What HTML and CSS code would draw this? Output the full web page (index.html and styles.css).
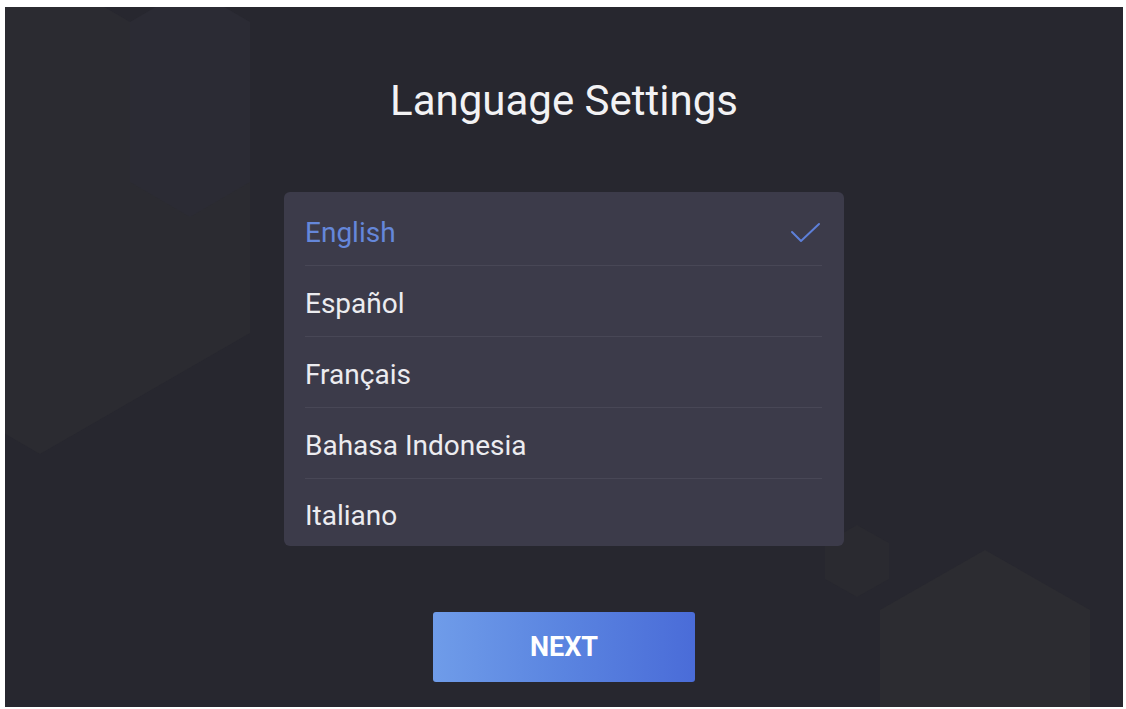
FILE: index.html
```html
<!DOCTYPE html>
<html lang="en">
<head>
    <meta charset="UTF-8">
    <meta name="viewport" content="width=device-width, initial-scale=1.0">
    <title>Language Settings</title>
    <link rel="stylesheet" href="styles.css">
</head>
<body>
    <div class="screen">
        <!-- decorative hexagons behind the content -->
        <svg class="backdrop" width="1118" height="700" viewBox="0 0 1118 700">
            <polygon points="35,-37 245,84 245,326 35,447 -175,326 -175,84" fill="#2b2b31"/>
            <polygon points="185,-20 245,15 245,175 185,210 125,175 125,15" fill="#2b2b34"/>
            <polygon points="852,518 884,536 884,572 852,590 820,572 820,536" fill="#2a2a30"/>
            <polygon points="980,543 1085,603 1085,720 980,780 875,720 875,603" fill="#2c2c31"/>
        </svg>

        <h1>Language Settings</h1>

        <ul class="lang-list">
            <li class="selected">English
                <svg class="check" width="32" height="24" viewBox="0 0 32 24">
                    <polyline points="2,11 11,20 29,3" fill="none" stroke="#5d7fd8" stroke-width="2" stroke-linecap="round" stroke-linejoin="round"/>
                </svg>
            </li>
            <li>Español</li>
            <li>Français</li>
            <li>Bahasa Indonesia</li>
            <li>Italiano</li>
        </ul>

        <button class="next-btn">NEXT</button>
    </div>
</body>
</html>
```

FILE: styles.css
```css
body {
    margin: 0;
    background-color: #ffffff;
    font-family: Roboto, "Liberation Sans", sans-serif;
}
.screen {
    position: relative;
    overflow: hidden;
    width: 1118px;
    height: 700px;
    margin: 7px 0 0 5px;
    background-color: #27272f;
    display: flex;
    flex-direction: column;
    align-items: center;
}
.backdrop {
    position: absolute;
    left: 0;
    top: 0;
}
h1 {
    position: relative;
    margin: 69px 0 0 0;
    font-size: 42px;
    font-weight: 400;
    line-height: 50px;
    color: #f2f2f4;
}
.lang-list {
    position: relative;
    list-style: none;
    width: 560px;
    margin: 66px 0 0 0;
    padding: 3px 0 0 0;
    background-color: #3c3b4a;
    border-radius: 6px;
}
.lang-list li {
    box-sizing: border-box;
    display: flex;
    align-items: center;
    justify-content: space-between;
    height: 71px;
    padding-top: 5px;
    margin: 0 22px 0 21px;
    border-bottom: 1px solid #484756;
    font-size: 28px;
    color: #ececf0;
}
.lang-list li:last-child {
    height: 67px;
    border-bottom: none;
}
.lang-list li.selected {
    color: #6587da;
}
.next-btn {
    position: relative;
    width: 262px;
    height: 70px;
    margin-top: 66px;
    border: none;
    border-radius: 3px;
    background: linear-gradient(90deg, #6f9ce9 0%, #5a84e0 50%, #4a6cd8 100%);
    color: #ffffff;
    font-family: Roboto, "Liberation Sans", sans-serif;
    font-size: 27px;
    font-weight: 700;
    cursor: pointer;
}
```
